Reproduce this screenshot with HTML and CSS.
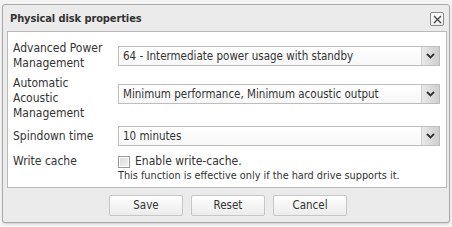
FILE: index.html
```html
<!DOCTYPE html>
<html>
<head>
<meta charset="utf-8">
<link rel="stylesheet" href="styles.css">
</head>
<body>
<div class="dialog">
  <div class="titlebar">
    <span class="title">Physical disk properties</span>
    <span class="close"><svg width="9" height="9" viewBox="0 0 9 9"><path d="M1 1 L8 8 M8 1 L1 8" stroke="#444" stroke-width="1.3" fill="none"/></svg></span>
  </div>
  <div class="panel">
    <div class="row r1">
      <div class="label">Advanced Power<br>Management</div>
      <div class="select"><span class="val">64 - Intermediate power usage with standby</span><span class="arrow"><svg width="9" height="6" viewBox="0 0 9 6"><path d="M1 1 L4.5 4.5 L8 1" stroke="#333" stroke-width="1.8" fill="none"/></svg></span></div>
    </div>
    <div class="row r2">
      <div class="label">Automatic<br>Acoustic<br>Management</div>
      <div class="select"><span class="val">Minimum performance, Minimum acoustic output</span><span class="arrow"><svg width="9" height="6" viewBox="0 0 9 6"><path d="M1 1 L4.5 4.5 L8 1" stroke="#333" stroke-width="1.8" fill="none"/></svg></span></div>
    </div>
    <div class="row r3">
      <div class="label">Spindown time</div>
      <div class="select"><span class="val">10 minutes</span><span class="arrow"><svg width="9" height="6" viewBox="0 0 9 6"><path d="M1 1 L4.5 4.5 L8 1" stroke="#333" stroke-width="1.8" fill="none"/></svg></span></div>
    </div>
    <div class="row r4">
      <div class="label">Write cache</div>
      <div class="field">
        <div class="check"><span class="box"></span><span>Enable write-cache.</span></div>
        <div class="note">This function is effective only if the hard drive supports it.</div>
      </div>
    </div>
  </div>
  <div class="buttons">
    <button class="btn">Save</button>
    <button class="btn">Reset</button>
    <button class="btn">Cancel</button>
  </div>
</div>
</body>
</html>
```
FILE: styles.css
```css
html, body {
  margin: 0;
  padding: 0;
  background: #f4f4f4;
}
body {
  font-family: "DejaVu Sans Condensed", "DejaVu Sans", Verdana, sans-serif;
  font-size: 11px;
  color: #333;
  width: 452px;
  height: 227px;
  overflow: hidden;
}
.dialog {
  margin: 4px 2px 0 2px;
  height: 217px;
  border: 1px solid #a9a9a9;
  border-radius: 3px;
  background: #ebebeb;
  display: flex;
  flex-direction: column;
  box-shadow: 0 1px 2px rgba(0,0,0,0.15);
}
.titlebar {
  height: 26px;
  display: flex;
  align-items: center;
  justify-content: space-between;
  padding: 0 5px 0 7px;
}
.title {
  font-weight: bold;
  font-size: 11px;
  letter-spacing: -0.1px;
  color: #333;
  margin-top: 1px;
}
.close {
  width: 12px;
  height: 12px;
  border: 1px solid #8a8a8a;
  border-radius: 2px;
  background: linear-gradient(#fff, #ececec);
  display: flex;
  align-items: center;
  justify-content: center;
  margin-top: 2px;
}
.panel {
  margin: 0 2px 0 4px;
  height: 157px;
  background: #fff;
  border: 1px solid #b9b9b9;
  padding: 8px 6px 0 5px;
  box-sizing: border-box;
}
.row {
  display: flex;
  align-items: center;
}
.label {
  width: 105px;
  flex: none;
  font-size: 12px;
  line-height: 15px;
  color: #333;
}
.r1 { height: 32px; }
.r2 { height: 44px; margin-top: 4px; align-items: flex-start; }
.r2 .select { margin-top: 8px; }
.r3 { height: 24px; margin-top: 4px; }
.r4 { margin-top: 6px; align-items: flex-start; }
.select {
  flex: 1;
  height: 20px;
  border: 1px solid #bdbdbd;
  box-sizing: border-box;
  background: linear-gradient(#fff, #f7f7f7);
  display: flex;
  align-items: center;
  font-size: 11.5px;
}
.val {
  flex: 1;
  padding-left: 4px;
  white-space: nowrap;
  overflow: hidden;
}
.arrow {
  width: 17px;
  height: 100%;
  border-left: 1px solid #d0d0d0;
  background: linear-gradient(90deg, #e9e9e9, #cfcfcf);
  display: flex;
  align-items: center;
  justify-content: center;
}
.field {
  flex: 1;
}
.check {
  display: flex;
  align-items: center;
  font-size: 12px;
  line-height: 15px;
}
.box {
  width: 10px;
  height: 10px;
  border: 1px solid #9a9a9a;
  background: linear-gradient(135deg, #d8d8d8, #f4f4f4);
  margin-right: 5px;
  box-shadow: inset 0 0 0 1px #fff;
}
.note {
  font-size: 10.8px;
  line-height: 13px;
  color: #333;
}
.buttons {
  flex: 1;
  display: flex;
  justify-content: center;
  align-items: center;
  gap: 8px;
  padding-left: 4px;
}
.btn {
  width: 74px;
  height: 21px;
  border: 1px solid #c6c6c6;
  border-radius: 2px;
  background: linear-gradient(#fefefe, #ececec);
  font-family: "DejaVu Sans Condensed", "DejaVu Sans", Verdana, sans-serif;
  font-size: 11.5px;
  color: #333;
  padding: 0;
}
```
